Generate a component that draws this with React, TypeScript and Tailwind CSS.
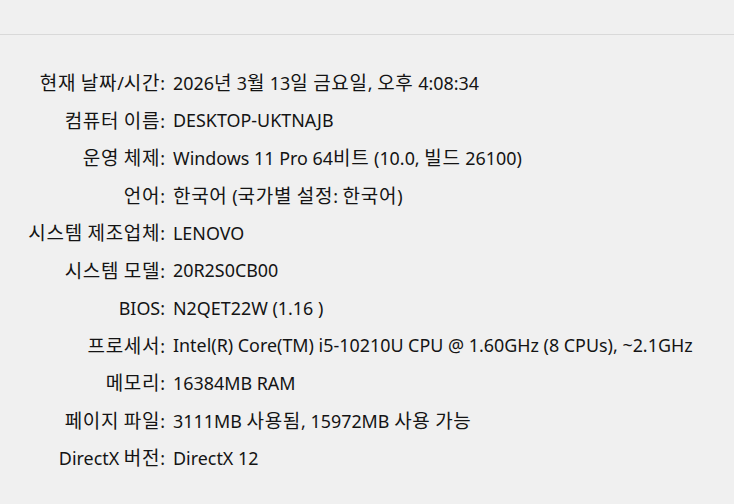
const rows: [string, string][] = [
  ['현재 날짜/시간:', '2026년 3월 13일 금요일, 오후 4:08:34'],
  ['컴퓨터 이름:', 'DESKTOP-UKTNAJB'],
  ['운영 체제:', 'Windows 11 Pro 64비트 (10.0, 빌드 26100)'],
  ['언어:', '한국어 (국가별 설정: 한국어)'],
  ['시스템 제조업체:', 'LENOVO'],
  ['시스템 모델:', '20R2S0CB00'],
  ['BIOS:', 'N2QET22W (1.16 )'],
  ['프로세서:', 'Intel(R) Core(TM) i5-10210U CPU @ 1.60GHz (8 CPUs), ~2.1GHz'],
  ['메모리:', '16384MB RAM'],
  ['페이지 파일:', '3111MB 사용됨, 15972MB 사용 가능'],
  ['DirectX 버전:', 'DirectX 12'],
];

// Hangul runs get a slightly larger face so they read like Malgun Gothic
function Mixed({ text }: { text: string }) {
  const parts = text.split(/([\uAC00-\uD7A3]+)/);
  return (
    <>
      {parts.map((p, i) =>
        /[\uAC00-\uD7A3]/.test(p) ? (
          <span key={i} className="text-[19px] tracking-[0.7px]">
            {p}
          </span>
        ) : (
          <span key={i}>{p}</span>
        ),
      )}
    </>
  );
}

export default function App() {
  return (
    <div
      className="w-[734px] h-[504px] bg-[#f0f0f0] text-[#141414] overflow-hidden"
      style={{ fontFamily: '"Noto Sans", "Noto Sans CJK KR", sans-serif' }}
    >
      <div className="h-[34px]" />
      <div className="h-px bg-[#d9d9d9]" />
      <div className="pt-[30px]">
        {rows.map(([label, value]) => (
          <div key={label} className="flex items-center h-[37.5px] text-[17.9px] leading-none">
            <div className="w-[165px] shrink-0 text-right whitespace-nowrap">
              <Mixed text={label} />
            </div>
            <div className="pl-[8px] whitespace-nowrap">
              <Mixed text={value} />
            </div>
          </div>
        ))}
      </div>
    </div>
  );
}
